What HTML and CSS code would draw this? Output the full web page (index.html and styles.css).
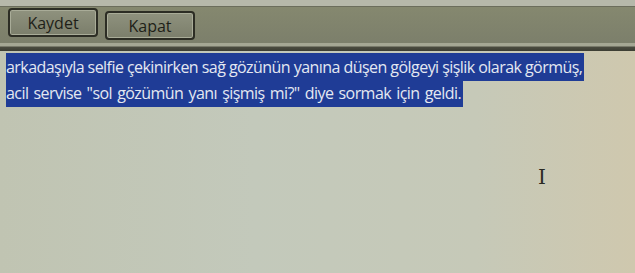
FILE: index.html
```html
<!DOCTYPE html>
<html lang="tr">
<head>
    <meta charset="UTF-8">
    <title>Not</title>
    <link rel="stylesheet" href="styles.css">
</head>
<body>
    <div class="toolbar">
        <button class="btn">Kaydet</button>
        <button class="btn btn-low">Kapat</button>
    </div>
    <div class="divider"></div>
    <div class="editor">
        <p class="line"><span class="sel">arkadaşıyla selfie çekinirken sağ gözünün yanına düşen gölgeyi şişlik olarak görmüş,</span></p>
        <p class="line line-wide"><span class="sel">acil servise "sol gözümün yanı şişmiş mi?" diye sormak için geldi.</span></p>
        <span class="cursor">I</span>
    </div>
</body>
</html>
```

FILE: styles.css
```css
html, body {
    margin: 0;
    height: 100%;
}

body {
    font-family: "Open Sans", "Noto Sans", sans-serif;
    background: #b6b8aa;
    overflow: hidden;
}

.toolbar {
    display: flex;
    gap: 7px;
    align-items: flex-start;
    height: 36px;
    margin-top: 6px;
    padding-left: 8px;
    background: linear-gradient(#85886f, #7c7f6b);
    border-top: 1px solid #6b6d5c;
}

.btn {
    width: 90px;
    height: 29px;
    margin-top: 1px;
    font-family: inherit;
    font-size: 16px;
    font-weight: 500;
    color: #1e1f18;
    background: linear-gradient(#8f927e, #7b7e6b);
    border: 2px solid #2c2d24;
    border-radius: 4px;
    box-shadow: inset 0 0 0 1px #a9ac98;
    padding: 0;
}

.btn-low {
    margin-top: 4px;
}

.divider {
    height: 8px;
    background: linear-gradient(#a5a794 0, #a5a794 3px, #4b4c40 4px, #3c3d33 8px);
}

.editor {
    position: relative;
    height: 230px;
    padding: 3px 0 0 6px;
    background: linear-gradient(90deg, #c0c4b2 0%, #c3c9bb 40%, #c6c9b8 75%, #cfc8ae 100%);
}

.line {
    margin: 0;
    font-size: 16px;
    line-height: 26px;
    letter-spacing: -0.55px;
}

.line-wide {
    word-spacing: 1.5px;
}

.sel {
    background: #1f3c96;
    color: #e4e8f1;
    padding: 3px 2px 3px 0;
}

.cursor {
    position: absolute;
    left: 538px;
    top: 114px;
    font-family: "DejaVu Serif", serif;
    font-size: 20px;
    color: #2a2a22;
}
```
